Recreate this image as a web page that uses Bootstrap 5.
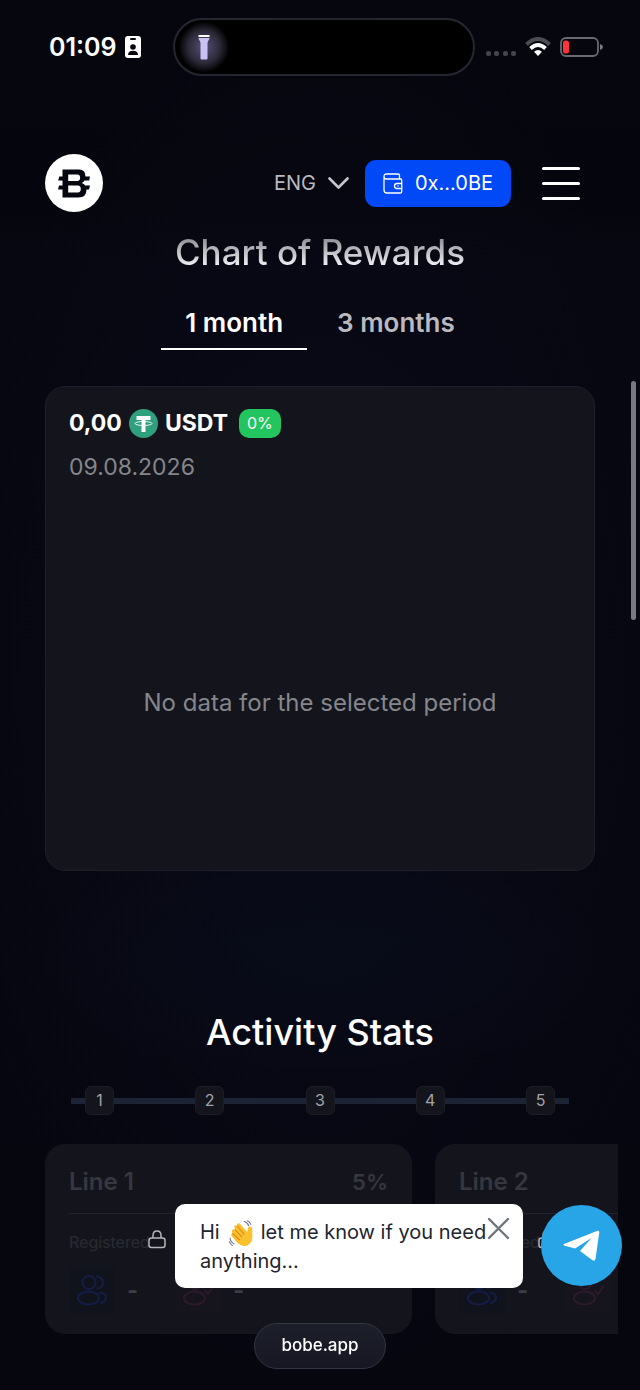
<!DOCTYPE html>
<html lang="en">
<head>
<meta charset="utf-8">
<meta name="viewport" content="width=device-width, initial-scale=1">
<title>bobe.app</title>
<link href="https://cdn.jsdelivr.net/npm/bootstrap@5.3.0/dist/css/bootstrap.min.css" rel="stylesheet">
<style>
  body { background: #06060f; color: #fff; font-family: Inter, "Liberation Sans", sans-serif; }
  .app-page { padding: 0 45px 56px; overflow: hidden; background:
    radial-gradient(ellipse 300px 120px at 50% 960px, #070c18, transparent),
    radial-gradient(ellipse 60% 700px at 50% 700px, #0a0a19, transparent),
    linear-gradient(#05060e 0, #05060d 210px, #070711 260px, #06060f 100%); }

  .status-bar { height: 94px; margin: 0 -8px 0 4px; }
  .clock { font-size: 25px; font-weight: 600; line-height: 30px; }
  .island { width: 302px; height: 58px; margin-left: 22px; border: 2px solid #262631; border-radius: 29px; background: #000; }
  .torch-glow { width: 50px; height: 50px; border-radius: 50%; background: radial-gradient(#555078 0, #2c2a38 45%, #000 72%); }

  .top-nav { height: 58px; margin-top: 60px; padding-right: 15px; }
  .lang-box select { appearance: none; background: transparent; border: 0; color: #b9b9bf; font-size: 20px; line-height: 28px; padding: 0 32px 0 0; }
  .lang-box svg { right: 0; top: 8px; pointer-events: none; }
  .wallet-btn { --bs-btn-bg: #0148f6; --bs-btn-color: #fff; --bs-btn-hover-bg: #0a3dd0; --bs-btn-hover-color: #fff; width: 146px; height: 47px; border: 0; border-radius: 11px; font-size: 20px; padding: 0; }
  .menu-btn { width: 38px; height: 33px; margin-left: 31px; }
  .menu-btn span { display: block; height: 3px; border-radius: 2px; background: #fff; }

  .section-title { font-size: 35px; font-weight: 500; line-height: 42px; margin: 0; text-align: center; }
  .title-faded { margin-top: 19px; color: transparent; background: linear-gradient(#8c8c92 15%, #ececf0 80%); -webkit-background-clip: text; background-clip: text; }
  .period-tabs { gap: 6px; margin-top: 23px; }
  .period-tabs button { height: 54px; padding: 0 24px; background: none; border: 0; border-bottom: 2px solid transparent; color: #b9b9bf; font-size: 26px; font-weight: 600; }
  .period-tabs button[aria-selected="true"] { color: #fff; border-color: #fff; }

  .panel { background: #14151c; border: 1px solid #1d1e27; border-radius: 20px; padding: 22px 23px; }
  .rewards { margin-top: 36px; min-height: 485px; padding-top: 21px; }
  .amount { font-size: 23px; font-weight: 700; line-height: 30px; gap: 7px; }
  .pct { margin-left: 4px; background: #22c55e; border-radius: 10px; font-size: 16px; font-weight: 400; line-height: 29px; padding: 0 8px; }
  .muted-text { color: #85868c; font-size: 23px; line-height: 30px; }
  .date-line { margin-top: 14px; }
  .empty-note { padding-top: 206px; font-size: 24px; }

  .stats-title { margin-top: 140px; font-size: 36px; }
  .stepper { margin: 33px 26px 0; padding: 0 14px; background: linear-gradient(#1c2334, #1c2334) center / 100% 6px no-repeat; }
  .stepper li { width: 29px; height: 29px; border-radius: 6px; background: #14151c; border: 1px solid #1b1c24; color: #a2a2a8; font-size: 16px; line-height: 27px; text-align: center; }

  .line-strip { margin: 29px -23px 0 0; gap: 23px; overflow: hidden; }
  .line-panel { flex: 0 0 367px; height: 190px; border-color: #15161d; color: #36373f; }
  .line-head { font-size: 24px; font-weight: 600; line-height: 30px; padding-bottom: 16px; border-bottom: 1px solid #22232a; }
  .line-rate { font-size: 22px; }
  .line-cell { flex: 0 0 106px; height: 90px; padding-top: 14px; font-size: 16px; line-height: 29px; color: #2a2b32; }
  .line-cell .lock { left: 79px; top: 16px; }
  .line-value { gap: 12px; height: 46px; margin-top: 10px; font-size: 24px; font-weight: 700; color: #3b3c44; }
  .tile { width: 46px; height: 46px; }
  .tile-blue { background: #11131c; color: #141d48; }
  .tile-pink { background: #16141c; color: #2d1b2c; }

  .chat-dock { right: 18px; bottom: 102px; gap: 18px; }
  .chat-bubble { width: 348px; padding: 14px 24px 12px 25px; border-radius: 10px; background: #fff; color: #1d2530; font-size: 20px; line-height: 29px; }
  .chat-bubble .wave { margin: 0 5px 0 8px; }
  .chat-bubble .close-x { top: 13px; right: 13px; line-height: 0; }
  .chat-link { width: 81px; height: 81px; background: #27a5e7; }
  .url-pill { bottom: 21px; height: 46px; width: 132px; border: 1px solid #343642; background: linear-gradient(#1d1f2b, #161722); color: #fff; font-size: 17px; font-weight: 500; }
  .scroll-mark { top: 381px; right: 4px; width: 5px; height: 239px; border-radius: 3px; background: #797981; }
</style>
</head>
<body>
<div class="app-page min-vh-100">

  <div class="status-bar d-flex align-items-center justify-content-between">
    <div class="d-flex align-items-center gap-2">
      <span class="clock">01:09</span>
      <svg width="16" height="22" viewBox="0 0 16 22" aria-hidden="true"><rect width="16" height="22" rx="3" fill="#fff"/><rect x="5" y="2" width="6" height="2" rx="1" fill="#06060f"/><circle cx="8" cy="11" r="2.8" fill="#06060f"/><path d="M3 19c0-3 2-4.200 5-4.200s5 1.200 5 4.200z" fill="#06060f"/></svg>
    </div>
    <div class="island d-flex align-items-center">
      <div class="torch-glow d-flex align-items-center justify-content-center ms-1">
        <svg width="12" height="26" viewBox="0 0 12 26" aria-hidden="true"><path d="M.5 1h11v2H.5z" fill="#fff"/><path d="M.5 4h11c0 2-2 3-2 5v15.500q0 1-1 1h-5q-1 0-1-1V9c0-2-2-3-2-5z" fill="#c9c1f4"/></svg>
      </div>
    </div>
    <div class="d-flex align-items-center">
      <svg width="31" height="20" viewBox="0 0 31 20" fill="#43444c" aria-hidden="true"><rect y="14" width="5" height="5" rx="2"/><rect x="8" y="14" width="5" height="5" rx="2"/><rect x="17" y="14" width="5" height="5" rx="2"/><rect x="25" y="14" width="5" height="5" rx="2"/></svg>
      <svg class="ms-2" width="26" height="20" viewBox="0 0 26 20" fill="none" aria-hidden="true"><path d="M1.500 7.500Q13-3.500 24.500 7.500" stroke="#4b4c53" stroke-width="4"/><path d="M5.500 11.500q7.500-7 15 0" stroke="#fff" stroke-width="3.800"/><path d="M9 14.800q4-3.600 8 0L13 19z" fill="#fff"/></svg>
      <svg class="ms-2" width="44" height="20" viewBox="0 0 44 20" aria-hidden="true"><rect x="2" y="1" width="37" height="18" rx="5" fill="none" stroke="#696a70" stroke-width="1.800"/><rect x="4" y="3.500" width="6" height="13" rx="2.500" fill="#ff3438"/><path d="M41 7q3 1 3 3t-3 3z" fill="#797a80"/></svg>
    </div>
  </div>

  <header class="top-nav d-flex align-items-center">
    <a href="#" class="me-auto" aria-label="Home">
      <svg class="d-block" width="58" height="58" viewBox="0 0 58 58"><circle cx="29" cy="29" r="29" fill="#fff"/><path fill="#06060e" fill-rule="evenodd" d="M17.500 15.500H34q6.500 0 6.500 7H45l-.8 4H39.500q-.8 1.800-2.800 2.500 2.500.8 3.500 2.500H45l-1 4h-2.500q0 8-8 8h-16v-8H13l1-4h3.500v-5H13.200l1-4h3.300zM23.200 20.500v6.500H33q2.200-.4 2.200-3.200T33 20.500zM23.200 31.500v7h9.600q3-.2 3-3.600 0-3-3-3.400z"/></svg>
    </a>
    <div class="lang-box position-relative">
      <select aria-label="Language"><option>ENG</option></select>
      <svg class="position-absolute" width="21" height="13" viewBox="0 0 21 13" fill="none" stroke="#c4c4c9" stroke-width="2.600" stroke-linecap="round" stroke-linejoin="round" aria-hidden="true"><path d="M1.500 1.500l9 9 9-9"/></svg>
    </div>
    <button type="button" class="btn wallet-btn d-flex align-items-center justify-content-center ms-3">
      <svg class="me-2" width="20" height="21" viewBox="0 0 20 21" fill="none" stroke="#fff" stroke-width="1.300" aria-hidden="true"><path d="M1 3.500Q1 1 3.500 1H15q1.500 0 1.500 1.500V6M1 3.500Q1 6 3.500 6H17.500q1.200 0 1.200 1.200V10.500M1 3.500V17q0 3 3 3h13.500q1.200 0 1.200-1.200V15.500M18.800 10.500H14q-2.500 0-2.500 2.500t2.500 2.500h4.800zM14.500 13h1"/></svg>
      <span class="ms-1">0x...0BE</span>
    </button>
    <button type="button" class="btn menu-btn border-0 p-0 d-flex flex-column justify-content-between align-items-stretch" aria-label="Menu"><span></span><span></span><span></span></button>
  </header>

  <main>
    <h2 class="section-title title-faded">Chart of Rewards</h2>
    <div class="period-tabs d-flex justify-content-center" role="tablist">
      <button type="button" role="tab" aria-selected="true">1 month</button>
      <button type="button" role="tab" aria-selected="false">3 months</button>
    </div>

    <section class="panel rewards">
      <div class="amount d-flex align-items-center">
        <span>0,00</span>
        <svg width="29" height="29" viewBox="0 0 29 29" aria-hidden="true"><circle cx="14.500" cy="14.500" r="14.500" fill="#2ea07d"/><path d="M7.500 7h14v4h-5v12h-4V11h-5z" fill="#fff"/><ellipse cx="14.500" cy="14.500" rx="8.500" ry="2" fill="none" stroke="#fff" stroke-width=".9"/></svg>
        <span>USDT</span>
        <span class="pct">0%</span>
      </div>
      <div class="muted-text date-line">09.08.2026</div>
      <div class="muted-text empty-note text-center">No data for the selected period</div>
    </section>

    <h2 class="section-title stats-title">Activity Stats</h2>
    <ol class="stepper list-unstyled d-flex justify-content-between">
      <li>1</li><li>2</li><li>3</li><li>4</li><li>5</li>
    </ol>

    <div class="line-strip d-flex">
      <article class="panel line-panel">
        <div class="line-head d-flex justify-content-between"><span>Line 1</span><span class="line-rate">5%</span></div>
        <div class="d-flex">
          <div class="line-cell position-relative">
            Registered
            <svg class="lock position-absolute" width="18" height="19" viewBox="0 0 18 19" fill="none" stroke="#b5b5ba" stroke-width="1.500" aria-hidden="true"><rect x="1" y="8" width="16" height="9.500" rx="2.500"/><path d="M5 8V5.500q0-4.500 4-4.500t4 4.500V8"/></svg>
            <div class="line-value d-flex align-items-center">
              <span class="tile tile-blue d-flex align-items-center justify-content-center"><svg width="32" height="32" viewBox="0 0 32 32" fill="none" stroke="currentColor" stroke-width="2" stroke-linecap="round" aria-hidden="true"><circle cx="13" cy="8.500" r="6.500"/><ellipse cx="12.500" cy="24" rx="10.500" ry="6.500"/><path d="M21 2.500q6 1 6 6t-5 6M24 18.500q6 1 6 5t-5 5.500"/></svg></span><span>-</span>
            </div>
          </div>
          <div class="line-cell">
            &nbsp;
            <div class="line-value d-flex align-items-center">
              <span class="tile tile-pink d-flex align-items-center justify-content-center"><svg width="32" height="32" viewBox="0 0 32 32" fill="none" stroke="currentColor" stroke-width="2" stroke-linecap="round" aria-hidden="true"><circle cx="13" cy="8.500" r="6.500"/><ellipse cx="12.500" cy="24" rx="10.500" ry="6.500"/><path d="M23 17l3 3 5-7"/></svg></span><span>-</span>
            </div>
          </div>
        </div>
      </article>
      <article class="panel line-panel">
        <div class="line-head d-flex justify-content-between"><span>Line 2</span></div>
        <div class="d-flex">
          <div class="line-cell position-relative">
            Registered
            <svg class="lock position-absolute" width="18" height="19" viewBox="0 0 18 19" fill="none" stroke="#b5b5ba" stroke-width="1.500" aria-hidden="true"><rect x="1" y="8" width="16" height="9.500" rx="2.500"/><path d="M5 8V5.500q0-4.500 4-4.500t4 4.500V8"/></svg>
            <div class="line-value d-flex align-items-center">
              <span class="tile tile-blue d-flex align-items-center justify-content-center"><svg width="32" height="32" viewBox="0 0 32 32" fill="none" stroke="currentColor" stroke-width="2" stroke-linecap="round" aria-hidden="true"><circle cx="13" cy="8.500" r="6.500"/><ellipse cx="12.500" cy="24" rx="10.500" ry="6.500"/><path d="M21 2.500q6 1 6 6t-5 6M24 18.500q6 1 6 5t-5 5.500"/></svg></span><span>-</span>
            </div>
          </div>
          <div class="line-cell">
            &nbsp;
            <div class="line-value d-flex align-items-center">
              <span class="tile tile-pink d-flex align-items-center justify-content-center"><svg width="32" height="32" viewBox="0 0 32 32" fill="none" stroke="currentColor" stroke-width="2" stroke-linecap="round" aria-hidden="true"><circle cx="13" cy="8.500" r="6.500"/><ellipse cx="12.500" cy="24" rx="10.500" ry="6.500"/><path d="M23 17l3 3 5-7"/></svg></span>
            </div>
          </div>
        </div>
      </article>
    </div>
  </main>
</div>

<div class="chat-dock position-fixed d-flex align-items-center">
  <div class="chat-bubble position-relative">
    Hi<svg class="wave" width="28" height="27" viewBox="0 0 26 26" role="img" aria-label="waving hand"><path d="M4 9.500q1-1.500 2.500 0L5.500 6q1-2 3 0L8 4.500Q9.500 2 11.500 4l6.500 7.500.6-3.500q.6-2.200 3-1.500 1.600.6 1.300 3L23 16q.2 6-5 8.500-5 2-9.500-2.500L3 15.500q-1-1.800 1-2.500L3.500 12q-.8-1.200.5-2.500z" fill="#fbc02d"/><path d="M6.500 9.500l6 6.500M8.500 6l6.500 7.500M4 13l6.500 6" stroke="#dc8d18" stroke-width="1.100" fill="none" stroke-linecap="round"/><path d="M15 1.500q3 .5 4.500 4M18 .7q2.500 1 3.500 3.500M1.500 17.500q.5 4 4 5.500M.8 21q1 2.500 3 3.500" stroke="#6b7486" stroke-width="1" fill="none" stroke-linecap="round"/></svg>let me know if you need anything...
    <button type="button" class="btn close-x position-absolute border-0 p-0" aria-label="Close"><svg width="23" height="23" viewBox="0 0 23 23" fill="none" stroke="#6f747c" stroke-width="2.400" stroke-linecap="round"><path d="M2 2l19 19M21 2L2 21"/></svg></button>
  </div>
  <a href="#" class="chat-link rounded-circle d-flex align-items-center justify-content-center" aria-label="Telegram">
    <svg width="37" height="32" viewBox="0 0 37 32" aria-hidden="true"><path d="M1 14L34.500.8q2-.5 1.800 1.600L32.500 29q-.6 2.600-3 1.200L17 21 28.500 8 12 18.500.9 15.500Q0 14.600 1 14z" fill="#fff"/></svg>
  </a>
</div>
<a href="#" class="url-pill position-fixed start-50 translate-middle-x rounded-pill d-flex align-items-center justify-content-center text-decoration-none">bobe.app</a>
<div class="scroll-mark position-fixed" aria-hidden="true"></div>
<script src="https://cdn.jsdelivr.net/npm/bootstrap@5.3.0/dist/js/bootstrap.bundle.min.js"></script>
</body>
</html>
